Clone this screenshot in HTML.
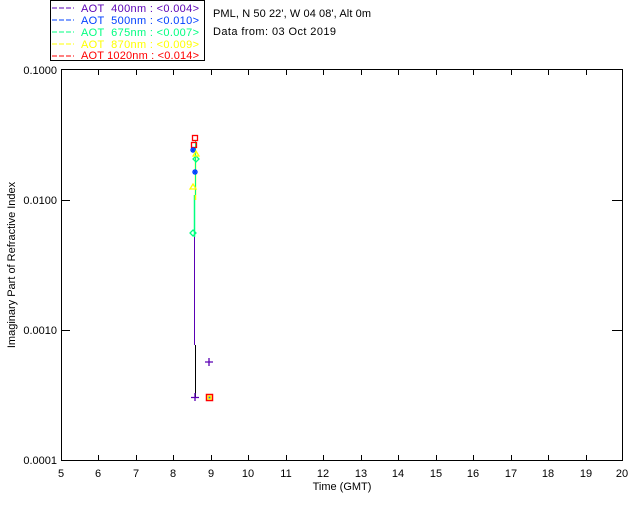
<!DOCTYPE html>
<html><head><style>
html,body{margin:0;padding:0;background:#fff;}
svg{display:block;font-family:"Liberation Sans",sans-serif;font-size:11px;}
</style></head><body>
<svg width="640" height="512" viewBox="0 0 640 512" xmlns="http://www.w3.org/2000/svg">
<rect width="640" height="512" fill="#fff"/>
<rect x="50.5" y="0.5" width="154" height="60" fill="none" stroke="#000"/>
<g font-size="11">
<line x1="52" y1="8" x2="74" y2="8" stroke="#5a00b4" stroke-dasharray="5,2"/>
<text x="81" y="12" fill="#5a00b4" textLength="118" xml:space="preserve">AOT  400nm : &lt;0.004&gt;</text>
<line x1="52" y1="20" x2="74" y2="20" stroke="#0040ff" stroke-dasharray="5,2"/>
<text x="81" y="24" fill="#0040ff" textLength="118" xml:space="preserve">AOT  500nm : &lt;0.010&gt;</text>
<line x1="52" y1="32" x2="74" y2="32" stroke="#00ff80" stroke-dasharray="5,2"/>
<text x="81" y="36" fill="#00ff80" textLength="118" xml:space="preserve">AOT  675nm : &lt;0.007&gt;</text>
<line x1="52" y1="44" x2="74" y2="44" stroke="#ffff00" stroke-dasharray="5,2"/>
<text x="81" y="48" fill="#ffff00" textLength="118" xml:space="preserve">AOT  870nm : &lt;0.009&gt;</text>
<line x1="52" y1="56" x2="74" y2="56" stroke="#ff0000" stroke-dasharray="5,2"/>
<text x="81" y="59" fill="#ff0000" textLength="118" xml:space="preserve">AOT 1020nm : &lt;0.014&gt;</text>
</g>
<text x="213" y="17" textLength="158">PML, N 50 22', W 04 08', Alt 0m</text>
<text x="213" y="35" textLength="123">Data from: 03 Oct 2019</text>
<rect x="61.5" y="69.5" width="561" height="391" fill="none" stroke="#000"/>
<g stroke="#000">
<line x1="61" y1="200.5" x2="70" y2="200.5"/><line x1="61" y1="330.5" x2="70" y2="330.5"/>
<line x1="612" y1="200.5" x2="622" y2="200.5"/><line x1="612" y1="330.5" x2="622" y2="330.5"/>
</g>
<g stroke="#000">
<line x1="98.5" y1="455" x2="98.5" y2="460"/><line x1="136.5" y1="455" x2="136.5" y2="460"/><line x1="173.5" y1="455" x2="173.5" y2="460"/><line x1="211.5" y1="455" x2="211.5" y2="460"/><line x1="248.5" y1="455" x2="248.5" y2="460"/><line x1="286.5" y1="455" x2="286.5" y2="460"/><line x1="323.5" y1="455" x2="323.5" y2="460"/><line x1="361.5" y1="455" x2="361.5" y2="460"/><line x1="398.5" y1="455" x2="398.5" y2="460"/><line x1="436.5" y1="455" x2="436.5" y2="460"/><line x1="473.5" y1="455" x2="473.5" y2="460"/><line x1="511.5" y1="455" x2="511.5" y2="460"/><line x1="548.5" y1="455" x2="548.5" y2="460"/><line x1="586.5" y1="455" x2="586.5" y2="460"/>
<line x1="98.5" y1="70" x2="98.5" y2="75"/><line x1="136.5" y1="70" x2="136.5" y2="75"/><line x1="173.5" y1="70" x2="173.5" y2="75"/><line x1="211.5" y1="70" x2="211.5" y2="75"/><line x1="248.5" y1="70" x2="248.5" y2="75"/><line x1="286.5" y1="70" x2="286.5" y2="75"/><line x1="323.5" y1="70" x2="323.5" y2="75"/><line x1="361.5" y1="70" x2="361.5" y2="75"/><line x1="398.5" y1="70" x2="398.5" y2="75"/><line x1="436.5" y1="70" x2="436.5" y2="75"/><line x1="473.5" y1="70" x2="473.5" y2="75"/><line x1="511.5" y1="70" x2="511.5" y2="75"/><line x1="548.5" y1="70" x2="548.5" y2="75"/><line x1="586.5" y1="70" x2="586.5" y2="75"/>
</g>
<g text-anchor="end">
<text x="57" y="74">0.1000</text><text x="57" y="204">0.0100</text><text x="57" y="334">0.0010</text><text x="57" y="464">0.0001</text>
</g>
<g text-anchor="middle">
<text x="61" y="477">5</text><text x="98" y="477">6</text><text x="136" y="477">7</text><text x="173" y="477">8</text><text x="211" y="477">9</text><text x="248" y="477">10</text><text x="286" y="477">11</text><text x="323" y="477">12</text><text x="361" y="477">13</text><text x="398" y="477">14</text><text x="436" y="477">15</text><text x="473" y="477">16</text><text x="511" y="477">17</text><text x="548" y="477">18</text><text x="586" y="477">19</text><text x="622" y="477">20</text>
<text x="342" y="490">Time (GMT)</text>
<text transform="translate(15,265) rotate(-90)">Imaginary Part of Refractive Index</text>
</g>
<line x1="194.5" y1="237" x2="194.5" y2="345" stroke="#5a00b4"/>
<line x1="195.5" y1="345" x2="195.5" y2="397" stroke="#000"/>
<line x1="194.5" y1="195" x2="194.5" y2="237" stroke="#00ff80" stroke-width="1.5"/>
<line x1="195.5" y1="152" x2="195.5" y2="200" stroke="#ffff00" stroke-width="1.5"/>
<line x1="195.5" y1="140" x2="195.5" y2="195" stroke="#00ff80"/>
<g fill="none" stroke-width="1.3">
<rect x="191.5" y="142.5" width="5" height="5" stroke="#ff0000"/>
<rect x="192.5" y="135.5" width="5" height="5" stroke="#ff0000"/>
<path d="M190 150h6M193 147v6M191 148l4 4M195 148l-4 4" stroke="#0040ff"/>
<path d="M192 172h6M195 169v6M193 170l4 4M197 170l-4 4" stroke="#0040ff"/>
<path d="M196 156l3 3-3 3-3-3z" stroke="#00ff80"/>
<path d="M193 230l3 3-3 3-3-3z" stroke="#00ff80"/>
<path d="M196 151l3 5h-6z" stroke="#ffff00"/>
<path d="M193 184l3 5h-6z" stroke="#ffff00"/>
<path d="M205 362h8M209 358v8" stroke="#5a00b4"/>
<path d="M191 397.5h8M195 393v8" stroke="#5a00b4"/>
<rect x="206.5" y="394.5" width="6" height="6" stroke="#ff0000" stroke-width="1.5"/>
<rect x="208" y="396" width="3" height="3" fill="#2060ff" stroke="#ffff00"/>
</g>
</svg>
</body></html>
